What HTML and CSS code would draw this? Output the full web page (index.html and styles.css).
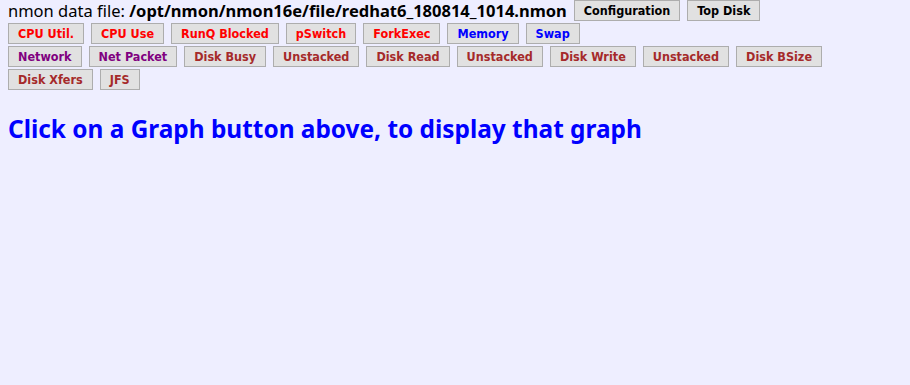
FILE: index.html
```html
<!DOCTYPE html>
<html>
<head>
<meta charset="utf-8">
<link rel="stylesheet" href="styles.css">
</head>
<body>
<div class="row first">
  <span class="label">nmon data file: <b>/opt/nmon/nmon16e/file/redhat6_180814_1014.nmon</b></span>
  <button class="btn black">Configuration</button>
  <button class="btn black">Top Disk</button>
</div>
<div class="row">
  <button class="btn red">CPU Util.</button>
  <button class="btn red">CPU Use</button>
  <button class="btn red">RunQ Blocked</button>
  <button class="btn red">pSwitch</button>
  <button class="btn red">ForkExec</button>
  <button class="btn blue">Memory</button>
  <button class="btn blue">Swap</button>
</div>
<div class="row">
  <button class="btn purple">Network</button>
  <button class="btn purple">Net Packet</button>
  <button class="btn brown">Disk Busy</button>
  <button class="btn brown">Unstacked</button>
  <button class="btn brown">Disk Read</button>
  <button class="btn brown">Unstacked</button>
  <button class="btn brown">Disk Write</button>
  <button class="btn brown">Unstacked</button>
  <button class="btn brown">Disk BSize</button>
</div>
<div class="row">
  <button class="btn brown">Disk Xfers</button>
  <button class="btn brown">JFS</button>
</div>
<h2 class="msg">Click on a Graph button above, to display that graph</h2>
</body>
</html>
```
FILE: styles.css
```css
html, body {
  background: #eeeeff;
}
body {
  margin: 0 8px;
  font-family: "Noto Sans", "DejaVu Sans", sans-serif;
}
.row {
  display: flex;
  align-items: center;
  gap: 7px;
  margin-bottom: 2px;
}
.label {
  font-size: 16.5px;
  color: #000;
  line-height: 21px;
}
.label b {
  font-weight: bold;
}
.btn {
  height: 21px;
  margin: 0;
  padding: 0 9px;
  background: #e1e1e1;
  border: 1px solid #adadad;
  border-radius: 0;
  font-family: "DejaVu Sans Condensed", "DejaVu Sans", sans-serif;
  font-stretch: condensed;
  font-weight: bold;
  font-size: 12.5px;
  line-height: 19px;
}
.black { color: #000; }
.red { color: #ff0000; }
.blue { color: #0000ff; }
.purple { color: #800080; }
.brown { color: #a52a2a; }
.msg {
  margin: 23px 0 0 0;
  font-size: 24.4px;
  font-weight: bold;
  color: #0000ff;
  line-height: 32px;
}
```
